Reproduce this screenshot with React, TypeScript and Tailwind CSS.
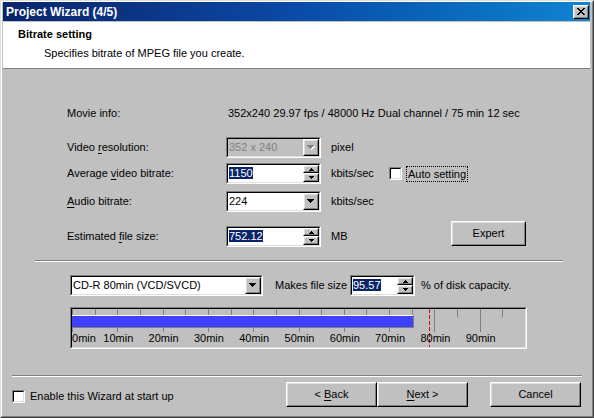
import React from 'react';

function Raised({ className = '', children }: { className?: string; children?: React.ReactNode }) {
  return (
    <div className={`border border-t-white border-l-white border-b-black border-r-black ${className}`}>
      <div className="w-full h-full border border-t-[#dfdfdf] border-l-[#dfdfdf] border-b-[#808080] border-r-[#808080] bg-[#c0c0c0] flex items-center justify-center">
        {children}
      </div>
    </div>
  );
}

function Sunken({ className = '', inner = 'bg-white', children }: { className?: string; inner?: string; children?: React.ReactNode }) {
  return (
    <div className={`border border-t-[#808080] border-l-[#808080] border-b-white border-r-white ${className}`}>
      <div className={`w-full h-full border border-t-black border-l-black border-b-[#dfdfdf] border-r-[#dfdfdf] flex ${inner}`}>
        {children}
      </div>
    </div>
  );
}

function DownArrow({ disabled }: { disabled?: boolean }) {
  const c = disabled ? '#808080' : '#000';
  return (
    <svg width="8" height="5" viewBox="0 0 8 5" shapeRendering="crispEdges">
      {disabled && <path d="M1 1h7v1H1zM2 2h5v1H2zM3 3h3v1H3zM4 4h1v1H4z" fill="#fff" />}
      <path d="M0 0h7v1H0zM1 1h5v1H1zM2 2h3v1H2zM3 3h1v1H3z" fill={c} />
    </svg>
  );
}

function SpinArrows() {
  return (
    <div className="flex flex-col w-[16px] h-full">
      <Raised className="w-full h-[8px]">
        <svg width="5" height="3" viewBox="0 0 5 3" shapeRendering="crispEdges">
          <path d="M2 0h1v1H2zM1 1h3v1H1zM0 2h5v1H0z" fill="#000" />
        </svg>
      </Raised>
      <Raised className="w-full h-[9px]">
        <svg width="5" height="3" viewBox="0 0 5 3" shapeRendering="crispEdges">
          <path d="M0 0h5v1H0zM1 1h3v1H1zM2 2h1v1H2z" fill="#000" />
        </svg>
      </Raised>
    </div>
  );
}

function Combo({ w, value, disabled }: { w: string; value: string; disabled?: boolean }) {
  return (
    <Sunken className={`${w} h-[21px]`} inner={disabled ? 'bg-[#c0c0c0]' : 'bg-white'}>
      <span className={`flex-1 pl-[1px] self-center leading-[13px] ${disabled ? 'text-[#808080]' : ''}`}>{value}</span>
      <Raised className="w-[16px] h-full">
        <DownArrow disabled={disabled} />
      </Raised>
    </Sunken>
  );
}

function Spin({ w, value }: { w: string; value: string }) {
  return (
    <Sunken className={`${w} h-[21px]`}>
      <span className="flex-1 pl-[1px] self-center leading-[13px]">
        <span className="bg-[#0a246a] text-white">{value}</span>
      </span>
      <SpinArrows />
    </Sunken>
  );
}

function CheckBox() {
  return <Sunken className="w-[13px] h-[13px] shrink-0" />;
}

function Button({ w, children }: { w: string; children: React.ReactNode }) {
  return (
    <Raised className={`${w} h-[25px]`}>
      <span className="leading-[13px]">{children}</span>
    </Raised>
  );
}

function Etched({ className = '' }: { className?: string }) {
  return <div className={`h-[2px] border-t border-t-[#808080] border-b border-b-white ${className}`} />;
}

function Scale() {
  const step = 22.65;
  const ticks = Array.from({ length: 20 }, (_, i) => i);
  const labels = [0, 10, 20, 30, 40, 50, 60, 70, 80, 90];
  return (
    <Sunken className="ml-[67px] mt-[11px] w-[457px] h-[42px]" inner="bg-[#c0c0c0] relative overflow-hidden">
      <svg className="absolute left-0 top-0" width="453" height="38" shapeRendering="crispEdges">
        {ticks.map((i) => (
          <rect key={i} x={Math.round(i * step)} y={0} width={1} height={i % 2 === 0 ? 23 : 8} fill="#808080" />
        ))}
        <rect x={0} y={6} width={341} height={1} fill="#fff" />
        <rect x={0} y={7} width={341} height={11} fill="#4040ff" />
        <rect x={0} y={18} width={342} height={1} fill="#808080" />
        <rect x={341} y={6} width={1} height={12} fill="#808080" />
        <line x1={357.5} y1={0} x2={357.5} y2={38} stroke="#e00000" strokeWidth={1} strokeDasharray="4 2" />
      </svg>
      {labels.map((m) => {
        const cx = (m / 5) * step;
        return (
          <span
            key={m}
            className={`absolute top-[23px] leading-[13px] ${m === 0 ? 'left-0' : '-translate-x-1/2'}`}
            style={m === 0 ? undefined : { left: cx + 1 }}
          >
            {m}min
          </span>
        );
      })}
    </Sunken>
  );
}

export default function App() {
  return (
    <div className="w-[594px] h-[418px] border border-t-[#dfdfdf] border-l-[#dfdfdf] border-b-[#404040] border-r-[#404040] bg-[#c0c0c0] font-['Liberation_Sans',Arial,sans-serif] text-[11px] text-black">
      <div className="w-full h-full border border-t-white border-l-white border-b-[#808080] border-r-[#808080] pl-[1px] pr-[2px] flex flex-col">
        {/* Title bar */}
        <div className="h-[19px] flex items-center justify-between bg-gradient-to-r from-[#0a246a] via-[#0a4aa8] to-[#1084d0] pl-[3px] pr-[1px]">
          <span className="text-white font-bold text-[12px] leading-[14px]">Project Wizard (4/5)</span>
          <Raised className="w-[16px] h-[14px]">
            <svg width="8" height="7" viewBox="0 0 8 7" shapeRendering="crispEdges">
              <path d="M0 0h2v1h1v1h2V1h1V0h2v1H7v1H6v1H5v1h1v1h1v1h1v1H6V6H5V5H3v1H2v1H0V6h1V5h1V4h1V3H2V2H1V1H0z" fill="#000" />
            </svg>
          </Raised>
        </div>
        {/* Header */}
        <div className="mt-[1px] h-[47px] bg-white border-b border-b-[#808080] pt-[6px] pl-[15px] flex flex-col">
          <span className="font-bold leading-[13px]">Bitrate setting</span>
          <span className="mt-[6px] ml-[26px] leading-[13px]">Specifies bitrate of MPEG file you create.</span>
        </div>

        {/* Body */}
        <div className="flex flex-col flex-1">
          <div className="mt-[38px] ml-[64px] flex h-[13px] items-center leading-[13px]">
            <span className="w-[161px]">Movie info:</span>
            <span>352x240 29.97 fps / 48000 Hz Dual channel / 75 min 12 sec</span>
          </div>

          <div className="mt-[17px] ml-[64px] flex h-[21px] items-center">
            <span className="w-[159px]">Video <span className="underline underline-offset-[2px]">r</span>esolution:</span>
            <Combo w="w-[95px]" value="352 x 240" disabled />
            <span className="ml-[10px]">pixel</span>
          </div>

          <div className="mt-[5px] ml-[64px] flex h-[21px] items-center">
            <span className="w-[159px]">Average <span className="underline underline-offset-[2px]">v</span>ideo bitrate:</span>
            <Spin w="w-[95px]" value="1150" />
            <span className="ml-[10px] w-[58px]">kbits/sec</span>
            <CheckBox />
            <span className="ml-[4px] border border-dotted border-black px-[1px] leading-[14px]">Auto setting</span>
          </div>

          <div className="mt-[7px] ml-[64px] flex h-[21px] items-center">
            <span className="w-[159px]"><span className="underline underline-offset-[2px]">A</span>udio bitrate:</span>
            <Combo w="w-[95px]" value="224" />
            <span className="ml-[10px]">kbits/sec</span>
          </div>

          <div className="mt-[9px] ml-[64px] flex h-[26px] items-end">
            <span className="w-[159px] self-end h-[21px] flex items-center">Estimated <span className="underline underline-offset-[2px] ml-[3px]">f</span>ile size:</span>
            <Spin w="w-[95px]" value="752.12" />
            <span className="ml-[10px] w-[58px] h-[21px] flex items-center">MB</span>
            <div className="ml-[62px] self-start">
              <Button w="w-[75px]">Expert</Button>
            </div>
          </div>

          <Etched className="mt-[13px] ml-[32px] w-[528px]" />

          <div className="mt-[13px] ml-[67px] flex h-[21px] items-center">
            <Combo w="w-[193px]" value="CD-R 80min (VCD/SVCD)" />
            <span className="ml-[12px] w-[75px]">Makes file size</span>
            <Spin w="w-[65px]" value="95.57" />
            <span className="ml-[6px]">% of disk capacity.</span>
          </div>

          <Scale />

          <Etched className="mt-[26px] ml-[9px] w-[570px]" />

          <div className="mt-[5px] flex h-[25px] items-center">
            <div className="ml-[9px] flex items-center mt-[3px]">
              <CheckBox />
              <span className="ml-[5px]">Enable this Wizard at start up</span>
            </div>
            <div className="ml-auto mr-[9px] flex">
              <Button w="w-[91px]">&lt; <span className="underline underline-offset-[2px]">B</span>ack</Button>
              <Button w="w-[91px]"><span className="underline underline-offset-[2px]">N</span>ext &gt;</Button>
              <div className="ml-[22px]">
                <Button w="w-[91px]">Cancel</Button>
              </div>
            </div>
          </div>
        </div>
      </div>
    </div>
  );
}
